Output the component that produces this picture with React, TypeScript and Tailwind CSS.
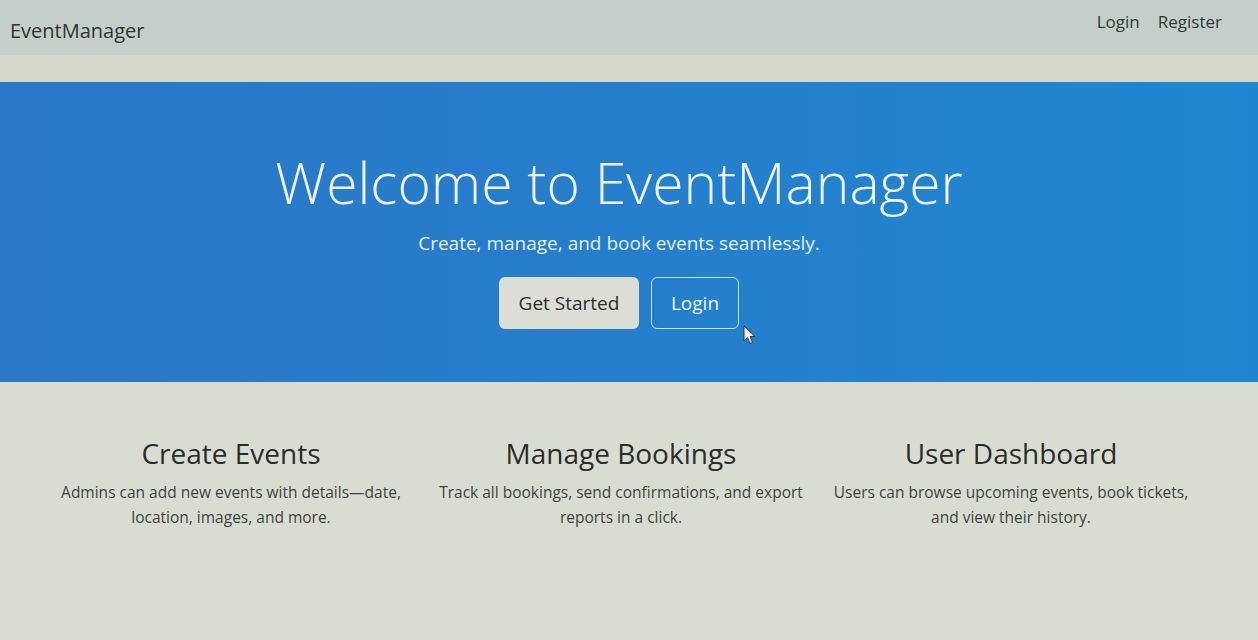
import React from "react";

const font = { fontFamily: '"Open Sans", "Noto Sans", sans-serif' };

function Feature({ title, text }: { title: string; text: React.ReactNode }) {
  return (
    <div className="flex flex-col items-center text-center">
      <h3 className="text-[28px] leading-[36px] font-normal text-[#2a2d2a]">{title}</h3>
      <p className="mt-[9px] text-[15.5px] leading-[25px] text-[#3f4340]">{text}</p>
    </div>
  );
}

export default function App() {
  return (
    <div className="min-h-[640px] w-[1258px] bg-[#d9ddd1] overflow-hidden" style={font}>
      <nav className="h-[55px] bg-[#c5cfca] flex items-center justify-between pl-[10px] pr-[36px]">
        <span className="text-[20px] text-[#2f3432] mt-[6px]">EventManager</span>
        <div className="flex gap-[18px] text-[17px] text-[#333836] -mt-[12px]">
          <span>Login</span>
          <span>Register</span>
        </div>
      </nav>
      <div className="h-[27px] bg-[#d3d8ca]" />
      <section className="relative h-[300px] bg-gradient-to-r from-[#2a77c7] to-[#1e86d0] flex flex-col items-center pr-[20px] text-white">
        <h1 className="mt-[62px] text-[57px] leading-[76px] font-light text-[#eef3f8]">Welcome to EventManager</h1>
        <p className="mt-[9px] text-[19px] leading-[28px] text-[#e6eef6]">Create, manage, and book events seamlessly.</p>
        <div className="mt-[20px] flex gap-[12px]">
          <button className="h-[52px] w-[140px] rounded-[6px] bg-[#dcded6] text-[19px] text-[#2b2d2b]">Get Started</button>
          <button className="h-[52px] w-[88px] rounded-[6px] border border-[#cfe2f3] text-[19px] text-[#eef4f9]">Login</button>
        </div>
        <svg className="absolute left-[743px] top-[243px]" width="14" height="20" viewBox="0 0 14 20">
          <path d="M1 1 L1 16 L4.5 12.5 L7 18.5 L9.5 17.5 L7 11.5 L12 11.5 Z" fill="#f4f4f4" stroke="#333" strokeWidth="1" />
        </svg>
      </section>
      <section className="grid grid-cols-3 w-[1170px] ml-[36px] pt-[53px] pb-[60px]">
        <Feature title="Create Events" text={<>Admins can add new events with details—date,<br />location, images, and more.</>} />
        <Feature title="Manage Bookings" text={<>Track all bookings, send confirmations, and export<br />reports in a click.</>} />
        <Feature title="User Dashboard" text={<>Users can browse upcoming events, book tickets,<br />and view their history.</>} />
      </section>
    </div>
  );
}
